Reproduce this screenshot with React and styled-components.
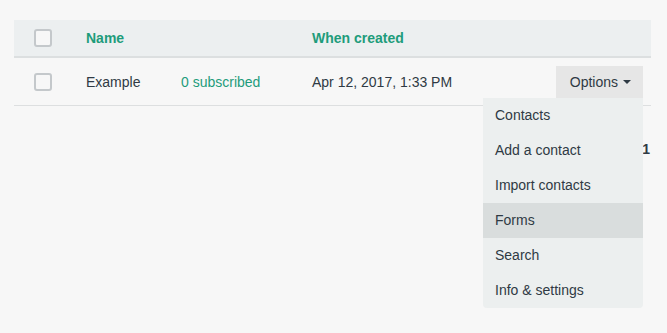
import React from "react"
import styled, { createGlobalStyle } from "styled-components"

const GlobalStyle = createGlobalStyle`
  body {
    margin: 0;
    background: #f7f7f7;
    font-family: "Liberation Sans", Arial, sans-serif;
    color: #2f3a44;
  }
`

const Page = styled.div`
  padding: 20px 16px 0 14px;
  min-height: 333px;
  box-sizing: border-box;
`

const Table = styled.div`
  width: 637px;
`

const Row = styled.div`
  display: grid;
  grid-template-columns: 72px 95px 131px 1fr auto;
  align-items: center;
  height: ${p => (p.head ? "36px" : "47px")};
  background: ${p => (p.head ? "#eceff0" : "transparent")};
  border-bottom: ${p => (p.head ? "2px solid #dcdfe0" : "1px solid #dddfe0")};
  font-size: 14px;
  position: relative;
`

const Cell = styled.div`
  color: ${p => (p.green ? "#1e9c7b" : "#2f3a44")};
  font-weight: ${p => (p.bold ? 700 : 400)};
  white-space: nowrap;
`

const CheckCell = styled.div`
  padding-left: 20px;
  display: flex;
  align-items: center;
`

const Checkbox = styled.span`
  display: block;
  width: 14px;
  height: 14px;
  border: 2px solid #c4c8cb;
  border-radius: 3px;
  background: #f7f7f7;
`

const OptionsWrap = styled.div`
  position: relative;
  margin-right: 8px;
`

const OptionsButton = styled.button`
  display: flex;
  align-items: center;
  gap: 5px;
  height: 32px;
  padding: 0 12px 0 14px;
  border: none;
  background: #e6e6e6;
  color: #2f3a44;
  font-family: inherit;
  font-size: 14px;
`

const Caret = styled.span`
  width: 0;
  height: 0;
  border-left: 4px solid transparent;
  border-right: 4px solid transparent;
  border-top: 4px solid #2f3a44;
`

const Menu = styled.ul`
  position: absolute;
  top: 32px;
  right: 0;
  width: 160px;
  margin: 0;
  padding: 0;
  list-style: none;
  background: #ecefef;
  border-radius: 0 0 4px 4px;
  z-index: 2;
`

const MenuItem = styled.li`
  height: 35px;
  line-height: 35px;
  padding-left: 12px;
  font-size: 14px;
  color: #2f3a44;
  background: ${p => (p.active ? "#d9dddd" : "transparent")};
`

const Pager = styled.div`
  display: flex;
  justify-content: flex-end;
  padding: 35px 1px 0 0;
  font-size: 14px;
  font-weight: 700;
  color: #2f3a44;
`

const menuItems = ["Contacts", "Add a contact", "Import contacts", "Forms", "Search", "Info & settings"]

const App = () => {
  return (
    <Page>
      <GlobalStyle />
      <Table>
        <Row head>
          <CheckCell><Checkbox /></CheckCell>
          <Cell green bold>Name</Cell>
          <Cell />
          <Cell green bold>When created</Cell>
          <Cell />
        </Row>
        <Row>
          <CheckCell><Checkbox /></CheckCell>
          <Cell>Example</Cell>
          <Cell green>0 subscribed</Cell>
          <Cell>Apr 12, 2017, 1:33 PM</Cell>
          <OptionsWrap>
            <OptionsButton>Options <Caret /></OptionsButton>
            <Menu>
              {menuItems.map(item => (
                <MenuItem key={item} active={item === "Forms"}>{item}</MenuItem>
              ))}
            </Menu>
          </OptionsWrap>
        </Row>
        <Pager>Page 1</Pager>
      </Table>
    </Page>
  )
}

export default App
